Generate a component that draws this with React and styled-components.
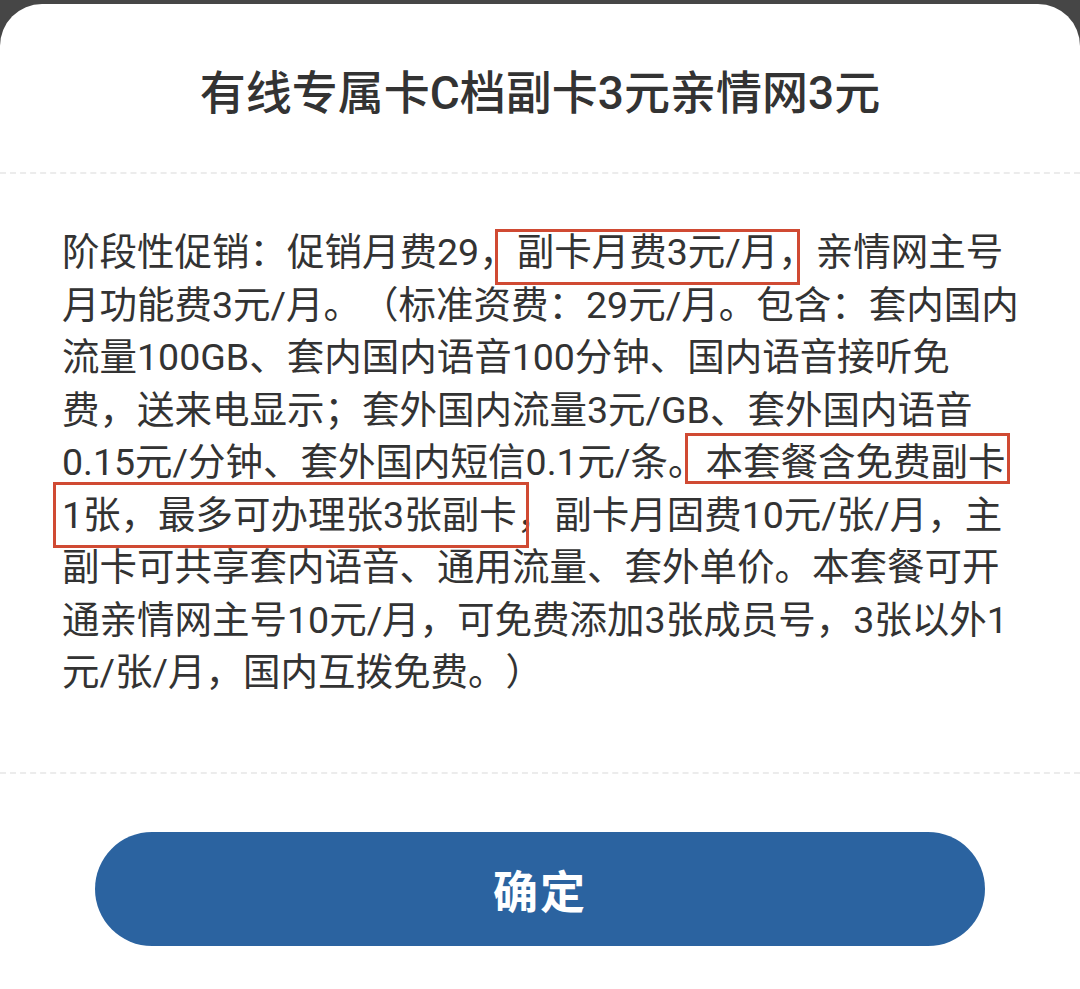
import React from 'react'
import styled, { createGlobalStyle } from 'styled-components'

const GlobalStyle = createGlobalStyle`
  html, body {
    margin: 0;
    padding: 0;
    background: #464646;
  }
  body {
    font-family: Roboto, "Noto Sans CJK SC", sans-serif;
    text-spacing-trim: space-all;
  }
`

const Sheet = styled.section`
  margin-top: 4px;
  min-height: 985px;
  background: #fff;
  border-radius: 42px 42px 0 0;
  display: flex;
  flex-direction: column;
  overflow: hidden;
`

const Header = styled.header`
  height: 170px;
  padding-top: 56px;
  box-sizing: border-box;
  border-bottom: 2px dashed #ececec;
`

const Title = styled.h1`
  margin: 0;
  font-family: Roboto, "Noto Sans CJK SC", sans-serif;
  font-size: 46px;
  font-weight: 500;
  line-height: 66px;
  color: #333;
  text-align: center;
`

const Body = styled.div`
  height: 600px;
  padding: 52px 0 0 62px;
  box-sizing: border-box;
  border-bottom: 2px dashed #ececec;
`

const Line = styled.div`
  font-size: 37.5px;
  line-height: 52.5px;
  height: 52.5px;
  color: #333;
  white-space: nowrap;
  text-spacing-trim: space-all;
`

const Mark = styled.span`
  position: relative;

  &::after {
    content: '';
    position: absolute;
    top: ${p => p.$t}px;
    bottom: ${p => p.$b}px;
    left: ${p => p.$l}px;
    right: ${p => p.$r}px;
    border: 3px solid #d04a33;
    pointer-events: none;
  }
`

const Footer = styled.footer`
  flex: 1;
  display: flex;
  justify-content: center;
  padding-top: 58px;
`

const Button = styled.button`
  width: 890px;
  height: 114px;
  border: none;
  border-radius: 57px;
  background: #2b63a0;
  color: #fff;
  font-family: "Noto Sans CJK SC", sans-serif;
  font-size: 45px;
  font-weight: 700;
  letter-spacing: 2px;
  cursor: pointer;
`

const App = () => {
  return (
    <>
      <GlobalStyle />
      <Sheet>
        <Header>
          <Title>有线专属卡C档副卡3元亲情网3元</Title>
        </Header>

        <Body>
          <Line>
            阶段性促销：促销月费29，
            <Mark $t={-1} $b={-11} $l={-22} $r={16}>副卡月费3元/月，</Mark>
            亲情网主号
          </Line>
          <Line>月功能费3元/月。（标准资费：29元/月。包含：套内国内</Line>
          <Line>流量100GB、套内国内语音100分钟、国内语音接听免</Line>
          <Line>费，送来电显示；套外国内流量3元/GB、套外国内语音</Line>
          <Line>
            0.15元/分钟、套外国内短信0.1元/条。
            <Mark $t={-7} $b={0} $l={-21} $r={-4}>本套餐含免费副卡</Mark>
          </Line>
          <Line>
            <Mark $t={-11} $b={-11} $l={-9} $r={25}>1张，最多可办理张3张副卡，</Mark>
            副卡月固费10元/张/月，主
          </Line>
          <Line>副卡可共享套内语音、通用流量、套外单价。本套餐可开</Line>
          <Line>通亲情网主号10元/月，可免费添加3张成员号，3张以外1</Line>
          <Line>元/张/月，国内互拨免费。）</Line>
        </Body>

        <Footer>
          <Button>确定</Button>
        </Footer>
      </Sheet>
    </>
  )
}

export default App
